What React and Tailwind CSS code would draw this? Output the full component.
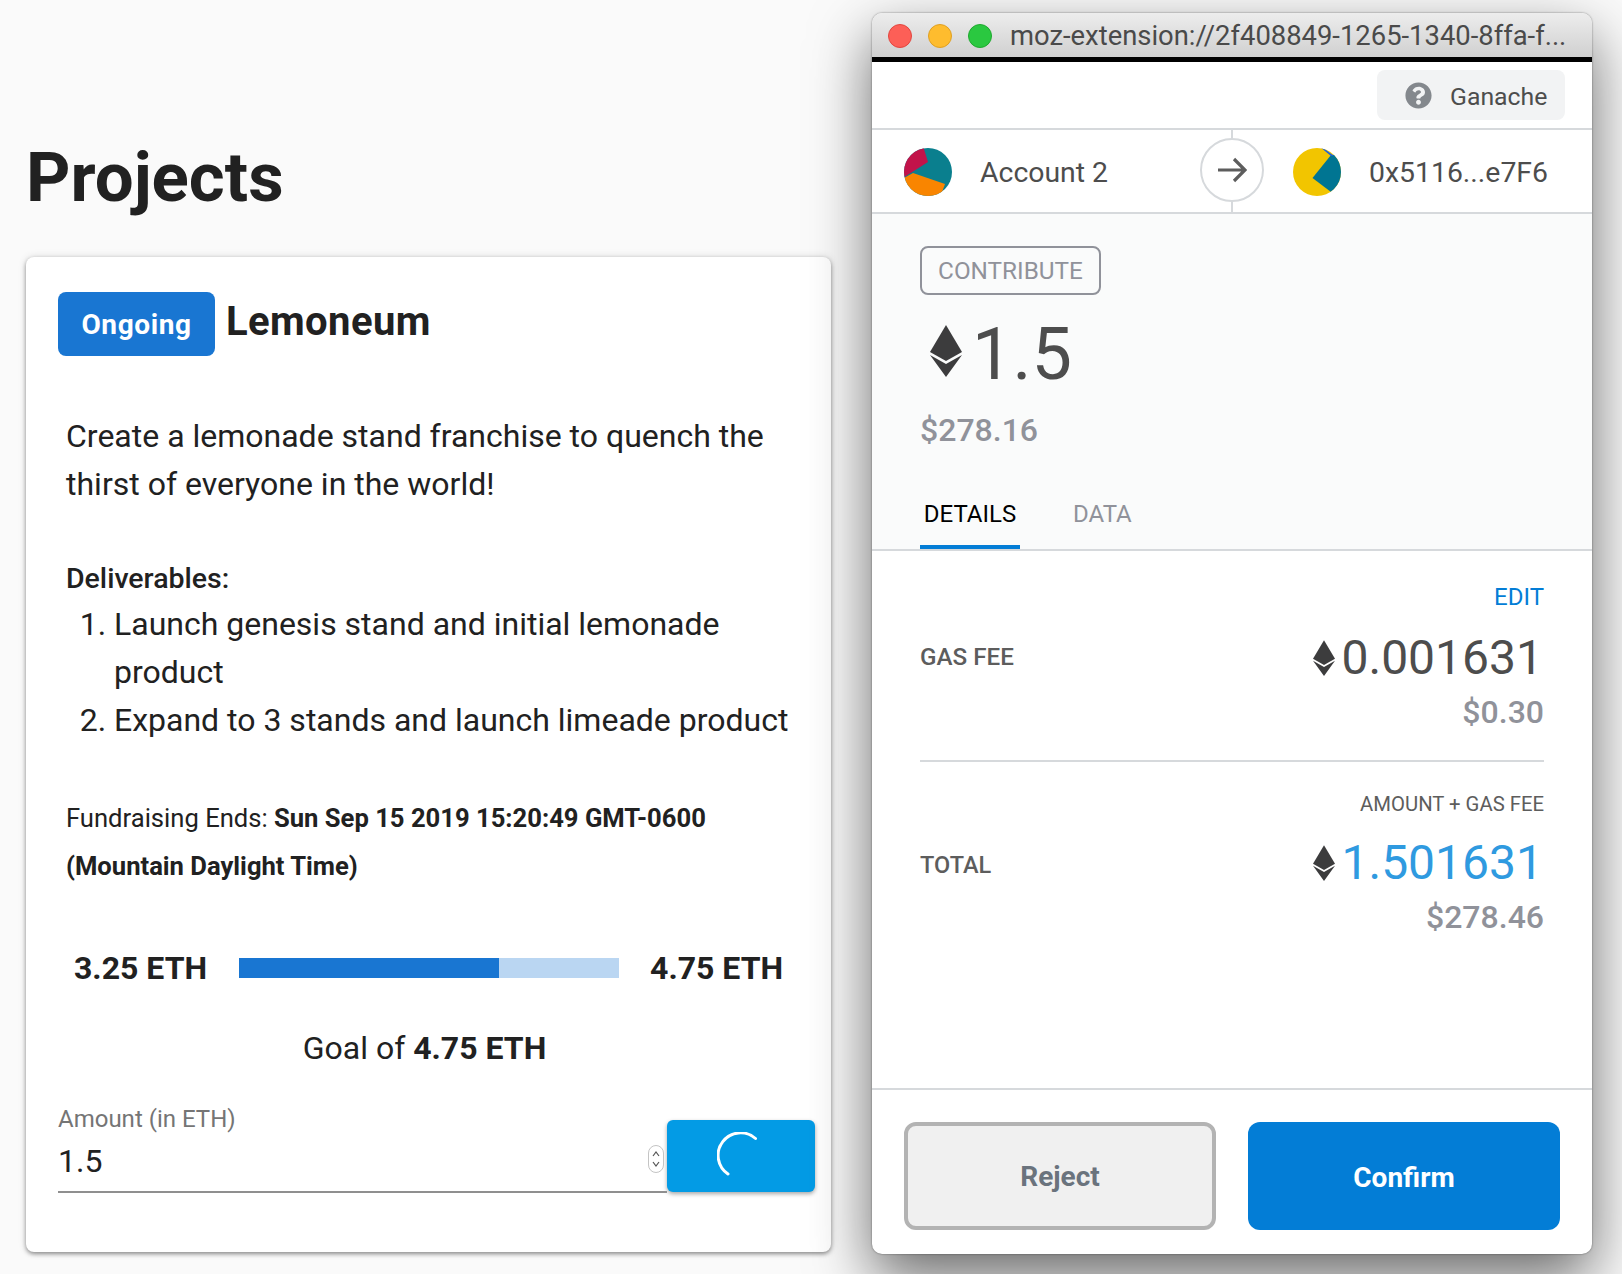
import React from "react";
import { FaQuestionCircle } from "react-icons/fa";

function Eth({ className }) {
  return (
    <svg viewBox="0 0 32 52" className={className}>
      <path d="M16 0L32 27L16 36L0 27Z" fill="#3c3c3d" />
      <path d="M0 30L16 39L32 30L16 52Z" fill="#3c3c3d" />
    </svg>
  );
}

function IdenticonA() {
  return (
    <svg viewBox="0 0 48 48" className="w-[48px] h-[48px] rounded-full shrink-0">
      <rect width="48" height="48" fill="#0a7f8e" />
      <path d="M19 -2L24 14L-1 30L-2 -2Z" fill="#c2134a" />
      <path d="M9 25L41 36L36 50L-2 50L-2 31Z" fill="#f98500" />
      <path d="M40 43L46 35L50 36L44 46Z" fill="#1b5fe0" />
    </svg>
  );
}

function IdenticonB() {
  return (
    <svg viewBox="0 0 48 48" className="w-[48px] h-[48px] rounded-full shrink-0">
      <rect width="48" height="48" fill="#f2c500" />
      <path d="M19.5 30L38 7L50 6L50 50L38 44Z" fill="#007592" />
      <path d="M29 -1L41 8L38 8L27 -1Z" fill="#1b5fe0" />
    </svg>
  );
}

function Row({ label, labelClass, value, valueClass, sub }) {
  return (
    <div className="flex justify-between items-start">
      <div className={`font-medium text-[#5d5d5d] ${labelClass}`}>{label}</div>
      <div className="flex flex-col items-end">
        <div className="flex items-center h-[48px]">
          <Eth className="w-[22px] h-[36px] mr-[7px]" />
          <span className={`text-[48px] leading-[48px] mr-px ${valueClass}`}>{value}</span>
        </div>
        <div className="mt-[10px] text-[32px] leading-[40px] font-medium text-[#90929a]">{sub}</div>
      </div>
    </div>
  );
}

export default function App() {
  return (
    <div className="w-[1622px] h-[1274px] bg-[#fafafa] flex overflow-hidden text-[#212121] font-['Roboto',sans-serif]">
      <div className="ml-[26px] w-[805px] shrink-0">
        <h1 className="h-[257px] pt-[138px] text-[69px] leading-[80px] font-bold">Projects</h1>
        <div className="h-[995px] bg-white rounded-[8px] shadow-[0_2px_4px_rgba(0,0,0,0.4),0_0_8px_rgba(0,0,0,0.12)] px-[32px] pt-[35px]">
          <div className="flex items-start">
            <span className="w-[157px] h-[64px] flex items-center justify-center rounded-[8px] bg-[#1976d2] text-white text-[28px] font-bold tracking-[0.6px] pt-[2px]">Ongoing</span>
            <span className="ml-[11px] text-[40px] leading-[60px] font-bold tracking-[0.4px]">Lemoneum</span>
          </div>
          <div className="ml-[8px] mt-[56px] text-[32px] leading-[48px]">
            <p>Create a lemonade stand franchise to quench the<br />thirst of everyone in the world!</p>
            <p className="mt-[50px] text-[28.5px] leading-[42px] font-medium">Deliverables:</p>
            <ol className="list-decimal pl-[48px]">
              <li>Launch genesis stand and initial lemonade product</li>
              <li>Expand to 3 stands and launch limeade product</li>
            </ol>
            <p className="mt-[50px] text-[25.6px] leading-[48px]">Fundraising Ends: <b className="font-bold">Sun Sep 15 2019 15:20:49 GMT-0600 (Mountain Daylight Time)</b></p>
          </div>
          <div className="mt-[54px] ml-[16px] flex items-center gap-[32px] h-[48px] text-[32px] font-bold">
            <span>3.25 ETH</span>
            <div className="w-[380px] h-[20px] bg-[#bad6f2]">
              <div className="w-[260px] h-full bg-[#1976d2]" />
            </div>
            <span className="-ml-px">4.75 ETH</span>
          </div>
          <div className="mt-[32px] h-[48px] text-[32px] leading-[48px] text-center w-[763px] -ml-[15px]">Goal of <b className="font-bold">4.75 ETH</b></div>
          <div className="mt-[31px] flex items-end w-[757px]">
            <div className="w-[609px] shrink-0">
              <div className="text-[24px] leading-[32px] text-[#757575]">Amount (in ETH)</div>
              <div className="relative h-[58px] border-b-2 border-[#8f8f8f] text-[32px] leading-[52px]">
                1.5
                <div className="absolute left-[590px] top-[10px] w-[16px] h-[28px] rounded-full border border-[#c4c4c4] bg-white flex flex-col items-center justify-center">
                  <svg viewBox="0 0 10 20" className="w-[10px] h-[20px]" fill="none" stroke="#555" strokeWidth="1.2"><path d="M2 7L5 3L8 7M2 13L5 17L8 13" /></svg>
                </div>
              </div>
            </div>
            <div className="w-[148px] h-[72px] shrink-0 mb-px rounded-[6px] bg-[#039be5] shadow-[0_2px_4px_rgba(0,0,0,0.35)] flex items-center justify-center">
              <svg viewBox="0 0 48 48" className="w-[48px] h-[48px]" fill="none" stroke="white" strokeWidth="3" strokeLinecap="round"><path d="M38.5 6.5A22.5 22.5 0 1 0 11 42" /></svg>
            </div>
          </div>
        </div>
      </div>

      <div className="ml-[41px] mt-[13px] w-[720px] h-[1241px] shrink-0 flex flex-col rounded-[10px] overflow-hidden bg-white shadow-[0_24px_60px_rgba(0,0,0,0.58),0_0_2px_rgba(0,0,0,0.5)]">
        <div className="h-[49px] shrink-0 pt-[1px] border-b-[5px] border-black bg-gradient-to-b from-[#ededed] to-[#d0d0d0] flex items-center pl-[16px]">
          <span className="w-[24px] h-[24px] rounded-full bg-[#fd5f57] border border-[#e2463f]" />
          <span className="ml-[16px] w-[24px] h-[24px] rounded-full bg-[#febc2e] border border-[#dfa023]" />
          <span className="ml-[16px] w-[24px] h-[24px] rounded-full bg-[#2ac840] border border-[#1fa92f]" />
          <span className="ml-[18px] pt-[3px] text-[27.4px] text-[#4a4a4a] whitespace-nowrap">moz-extension://2f408849-1265-1340-8ffa-f...</span>
        </div>
        <div className="h-[66px] shrink-0 pt-[8px] pr-[27px] flex justify-end items-start">
          <div className="w-[188px] h-[50px] rounded-[8px] bg-[#f2f3f4] flex items-center pl-[28px] text-[24.8px] text-[#4d4d4d]">
            <FaQuestionCircle className="w-[27px] h-[27px] text-[#84888d] mr-[18px]" />
            <span className="pt-[3px]">Ganache</span>
          </div>
        </div>
        <div className="relative h-[86px] shrink-0 border-y-2 border-[#d6d9dc] flex text-[28.4px] text-[#4d4d4d]">
          <div className="w-[360px] pl-[32px] pt-[2px] flex items-center gap-[28px]">
            <IdenticonA />
            <span className="pt-[2px]">Account 2</span>
          </div>
          <div className="pl-[61px] pt-[2px] flex items-center gap-[28px]">
            <IdenticonB />
            <span className="pt-[2px]">0x5116...e7F6</span>
          </div>
          <div className="absolute left-[359px] top-0 bottom-0 w-[2px] bg-[#d6d9dc]" />
          <div className="absolute left-[328px] top-[8px] w-[64px] h-[64px] rounded-full border-2 border-[#d6d9dc] bg-white flex items-center justify-center">
            <svg viewBox="0 0 30 26" className="w-[30px] h-[26px]" fill="none" stroke="#5d5d5d" strokeWidth="3.2"><path d="M1 13H28M17 2L28 13L17 24" /></svg>
          </div>
        </div>
        <div className="h-[337px] shrink-0 bg-[#fafbfb] border-b-2 border-[#d6d9dc] pl-[48px] relative">
          <div className="mt-[32px] w-[181px] h-[49px] rounded-[8px] border-2 border-[#90929a] flex items-center justify-center pt-[2px] text-[24.3px] text-[#90929a]">CONTRIBUTE</div>
          <div className="mt-[20px] flex items-center h-[72px] text-[#4d4d4d]">
            <Eth className="ml-[10px] w-[32px] h-[52px]" />
            <span className="ml-[10px] mt-[8px] text-[72px] leading-[72px]">1.5</span>
          </div>
          <div className="mt-[23px] text-[32px] leading-[40px] font-medium text-[#90929a]">$278.16</div>
          <div className="absolute left-[48px] bottom-0 flex text-[24px] leading-[22px]">
            <div className="w-[100px] h-[46px] border-b-4 border-[#037dd6] text-black text-center">DETAILS</div>
            <div className="ml-[53px] text-[#90929a]">DATA</div>
          </div>
        </div>
        <div className="flex-1 px-[48px]">
          <div className="mt-[34px] text-right text-[24px] leading-[24px] text-[#037dd6]">EDIT</div>
          <div className="mt-[25px]">
            <Row label="GAS FEE" labelClass="text-[24.2px] leading-[46px]" value="0.001631" valueClass="text-[#4d4d4d]" sub="$0.30" />
          </div>
          <div className="mt-[28px] h-[2px] bg-[#d6d9dc]" />
          <div className="mt-[30px] text-right text-[20.3px] leading-[24px] text-[#5d5d5d]">AMOUNT + GAS FEE</div>
          <div className="mt-[23px]">
            <Row label="TOTAL" labelClass="text-[23.5px] leading-[52px]" value="1.501631" valueClass="text-[#2f9ae0]" sub="$278.46" />
          </div>
        </div>
        <div className="h-[166px] shrink-0 border-t-2 border-[#d6d9dc] pt-[32px] px-[32px] flex justify-between items-start text-[28px] font-bold">
          <div className="w-[312px] h-[108px] pt-[2px] rounded-[12px] border-4 border-[#b3b3b3] bg-[#f0f0f0] text-[#6a737d] flex items-center justify-center">Reject</div>
          <div className="w-[312px] h-[108px] pt-[3px] rounded-[12px] bg-[#037dd6] text-white flex items-center justify-center">Confirm</div>
        </div>
      </div>
    </div>
  );
}
